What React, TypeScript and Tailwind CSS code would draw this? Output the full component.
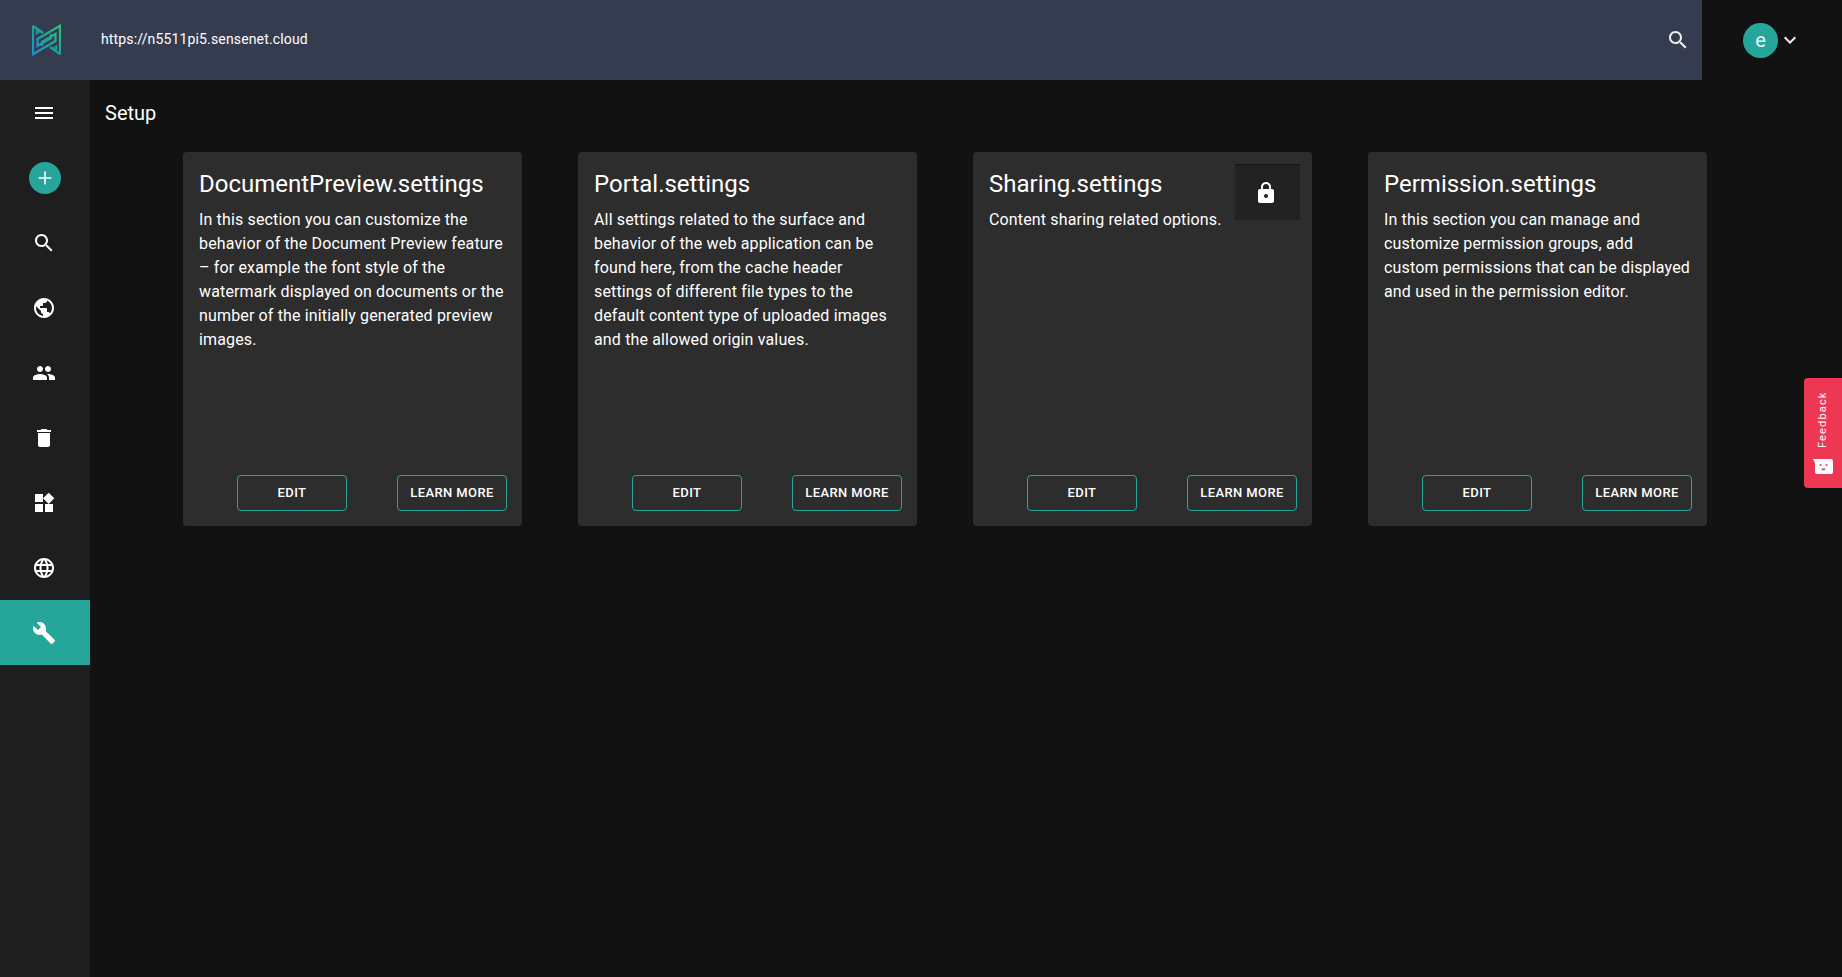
import { Plus } from "lucide-react";
import type { ReactNode } from "react";

const font = "font-['Roboto',sans-serif]";

// material icon paths
const icons = {
  menu: "M3 18h18v-2H3v2zm0-5h18v-2H3v2zm0-7v2h18V6H3z",
  search:
    "M15.5 14h-.79l-.28-.27C15.41 12.59 16 11.11 16 9.5 16 5.91 13.09 3 9.5 3S3 5.91 3 9.5 5.91 16 9.5 16c1.61 0 3.09-.59 4.23-1.57l.27.28v.79l5 4.99L20.49 19l-4.99-5zm-6 0C7.01 14 5 11.99 5 9.5S7.01 5 9.5 5 14 7.01 14 9.5 11.99 14 9.5 14z",
  public:
    "M12 2C6.48 2 2 6.48 2 12s4.48 10 10 10 10-4.48 10-10S17.52 2 12 2zm-1 17.93c-3.95-.49-7-3.85-7-7.93 0-.62.08-1.21.21-1.79L9 15v1c0 1.1.9 2 2 2v1.93zm6.9-2.54c-.26-.81-1-1.39-1.9-1.39h-1v-3c0-.55-.45-1-1-1H8v-2h2c.55 0 1-.45 1-1V7h2c1.1 0 2-.9 2-2v-.41c2.93 1.19 5 4.06 5 7.41 0 2.08-.8 3.97-2.1 5.39z",
  people:
    "M16 11c1.66 0 2.99-1.34 2.99-3S17.66 5 16 5c-1.66 0-3 1.34-3 3s1.34 3 3 3zm-8 0c1.66 0 2.99-1.34 2.99-3S9.66 5 8 5C6.34 5 5 6.34 5 8s1.34 3 3 3zm0 2c-2.33 0-7 1.17-7 3.5V19h14v-2.5c0-2.33-4.67-3.5-7-3.5zm8 0c-.29 0-.62.02-.97.05 1.16.84 1.97 1.97 1.97 3.45V19h6v-2.5c0-2.33-4.67-3.5-7-3.5z",
  trash:
    "M6 19c0 1.1.9 2 2 2h8c1.1 0 2-.9 2-2V7H6v12zM19 4h-3.5l-1-1h-5l-1 1H5v2h14V4z",
  widgets:
    "M13 13v8h8v-8h-8zM3 21h8v-8H3v8zM3 3v8h8V3H3zm13.66-1.31L11 7.34 16.66 13l5.66-5.66-5.66-5.65z",
  language:
    "M11.99 2C6.47 2 2 6.48 2 12s4.47 10 9.99 10C17.52 22 22 17.52 22 12S17.52 2 11.99 2zm6.93 6h-2.95c-.32-1.25-.78-2.45-1.38-3.56 1.84.63 3.37 1.91 4.33 3.56zM12 4.04c.83 1.2 1.48 2.53 1.91 3.96h-3.82c.43-1.43 1.08-2.76 1.91-3.96zM4.26 14C4.1 13.36 4 12.69 4 12s.1-1.36.26-2h3.38c-.08.66-.14 1.32-.14 2 0 .68.06 1.34.14 2H4.26zm.82 2h2.95c.32 1.25.78 2.45 1.38 3.56-1.84-.63-3.37-1.9-4.33-3.56zm2.95-8H5.08c.96-1.66 2.49-2.93 4.33-3.56C8.81 5.55 8.35 6.75 8.03 8zM12 19.96c-.83-1.2-1.48-2.53-1.91-3.96h3.82c-.43 1.43-1.08 2.76-1.91 3.96zM14.34 14H9.66c-.09-.66-.16-1.32-.16-2 0-.68.07-1.35.16-2h4.68c.09.65.16 1.32.16 2 0 .68-.07 1.34-.16 2zm.25 5.56c.6-1.11 1.06-2.31 1.38-3.56h2.95c-.96 1.65-2.49 2.93-4.33 3.56zM16.36 14c.08-.66.14-1.32.14-2 0-.68-.06-1.34-.14-2h3.38c.16.64.26 1.31.26 2s-.1 1.36-.26 2h-3.38z",
  build:
    "M22.7 19l-9.1-9.1c.9-2.3.4-5-1.5-6.9-2-2-5-2.4-7.4-1.3L9 6 6 9 1.6 4.7C.4 7.1.9 10.1 2.9 12.1c1.9 1.9 4.6 2.4 6.9 1.5l9.1 9.1c.4.4 1 .4 1.4 0l2.3-2.3c.5-.4.5-1.1.1-1.4z",
  lock:
    "M18 8h-1V6c0-2.76-2.24-5-5-5S7 3.24 7 6v2H6c-1.1 0-2 .9-2 2v10c0 1.1.9 2 2 2h12c1.1 0 2-.9 2-2V10c0-1.1-.9-2-2-2zm-6 9c-1.1 0-2-.9-2-2s.9-2 2-2 2 .9 2 2-.9 2-2 2zm3.1-9H8.9V6c0-1.71 1.39-3.1 3.1-3.1 1.71 0 3.1 1.39 3.1 3.1v2z",
  chevron: "M7.41 8.59 12 13.17l4.59-4.58L18 10l-6 6-6-6 1.41-1.41z",
};

function Icon({ d, className = "" }: { d: string; className?: string }) {
  return (
    <svg viewBox="0 0 24 24" fill="currentColor" className={`h-6 w-6 ${className}`}>
      <path d={d} />
    </svg>
  );
}

function Logo() {
  return (
    <svg viewBox="0 0 29 32" className="h-8 w-[29px]" fill="none">
      <defs>
        <linearGradient id="sn" x1="0" y1="32" x2="29" y2="0" gradientUnits="userSpaceOnUse">
          <stop offset="0" stopColor="#1a8fd4" />
          <stop offset="0.5" stopColor="#1fa39c" />
          <stop offset="1" stopColor="#2cc878" />
        </linearGradient>
      </defs>
      <g stroke="url(#sn)" strokeWidth="2.2" strokeLinejoin="miter">
        <path d="M1 1.8V30.2L23.5 17V10L10 18V22" />
        <path d="M28 30.2V1.8L5.5 15V22L19 14V10" />
        <path d="M1 1.8 11 9" />
        <path d="M28 30.2 18 23" />
        <path d="M4.5 6.5 7 8.3 4.5 10Z" strokeWidth="1.2" />
        <path d="M24.5 25.5 22 23.7 24.5 22Z" strokeWidth="1.2" />
      </g>
    </svg>
  );
}

function NavItem({ children, active }: { children: ReactNode; active?: boolean }) {
  return (
    <div
      className={`flex h-[65px] items-center justify-center pr-[2px] text-white ${
        active ? "bg-[#26a69a]" : ""
      }`}
    >
      {children}
    </div>
  );
}

function Sidebar() {
  return (
    <aside className="w-[90px] shrink-0 bg-[#1e1e1e]">
      <NavItem>
        <Icon d={icons.menu} />
      </NavItem>
      <NavItem>
        <div className="ml-[2px] flex h-8 w-8 items-center justify-center rounded-full bg-[#26a69a]">
          <Plus size={20} strokeWidth={2} />
        </div>
      </NavItem>
      <NavItem>
        <Icon d={icons.search} />
      </NavItem>
      <NavItem>
        <Icon d={icons.public} />
      </NavItem>
      <NavItem>
        <Icon d={icons.people} />
      </NavItem>
      <NavItem>
        <Icon d={icons.trash} />
      </NavItem>
      <NavItem>
        <Icon d={icons.widgets} />
      </NavItem>
      <NavItem>
        <Icon d={icons.language} />
      </NavItem>
      <NavItem active>
        <Icon d={icons.build} />
      </NavItem>
    </aside>
  );
}

type Setting = { title: string; text: string; locked?: boolean };

const settings: Setting[] = [
  {
    title: "DocumentPreview.settings",
    text: "In this section you can customize the behavior of the Document Preview feature – for example the font style of the watermark displayed on documents or the number of the initially generated preview images.",
  },
  {
    title: "Portal.settings",
    text: "All settings related to the surface and behavior of the web application can be found here, from the cache header settings of different file types to the default content type of uploaded images and the allowed origin values.",
  },
  {
    title: "Sharing.settings",
    text: "Content sharing related options.",
    locked: true,
  },
  {
    title: "Permission.settings",
    text: "In this section you can manage and customize permission groups, add custom permissions that can be displayed and used in the permission editor.",
  },
];

function OutlineButton({ label }: { label: string }) {
  return (
    <button className="flex h-9 w-[110px] items-center justify-center rounded-[4px] border border-[#26a69a] text-[13px] font-medium tracking-[0.4px] text-white">
      {label}
    </button>
  );
}

function SettingCard({ item }: { item: Setting }) {
  return (
    <div className="relative flex h-[374px] w-[339px] shrink-0 flex-col rounded-[4px] bg-[#2d2d2d] text-white">
      <div className="flex-1 px-4 pt-4">
        <h2 className="text-[24px] leading-8">{item.title}</h2>
        <p className="mt-2 text-[16px] leading-6 tracking-[0.15px]">{item.text}</p>
      </div>
      {item.locked && (
        <div className="absolute right-3 top-3 flex h-14 w-[65px] items-center justify-center border-t border-t-[#151515] bg-[#222222] pr-[3px]">
          <Icon d={icons.lock} />
        </div>
      )}
      <div className="flex justify-end gap-[50px] pb-[15px] pr-[15px]">
        <OutlineButton label="EDIT" />
        <OutlineButton label="LEARN MORE" />
      </div>
    </div>
  );
}

export default function App() {
  return (
    <div className={`relative flex h-screen w-full flex-col overflow-hidden bg-[#121212] ${font}`}>
      <header className="flex h-20 shrink-0">
        <div className="flex w-[1702px] items-center bg-[#363c50] pl-8 pr-3 text-white">
          <Logo />
          <span className="ml-10 flex-1 pb-[2px] text-[14px] tracking-[0.15px]">https://n5511pi5.sensenet.cloud</span>
          <Icon d={icons.search} className="text-[#eeeeee]" />
        </div>
        <div className="flex flex-1 items-center pl-[41px] text-[#eeeeee]">
          <div className="flex h-[35px] w-[35px] items-center justify-center rounded-full bg-[#26a69a] text-[20px] text-[#e8f5f3]">
            e
          </div>
          <Icon d={icons.chevron} />
        </div>
      </header>

      <div className="flex min-h-0 flex-1">
        <Sidebar />
        <main className="flex-1">
          <h1 className="pl-[15px] pt-[19px] text-[20px] font-normal leading-[28px] text-white">Setup</h1>
          <div className="mt-[25px] flex gap-[56px] pl-[93px]">
            {settings.map((s) => (
              <SettingCard key={s.title} item={s} />
            ))}
          </div>
        </main>
      </div>

      <div className="absolute right-0 top-[378px] flex h-[110px] w-[38px] flex-col items-center rounded-l-[4px] bg-[#ee3752] text-white">
        <span className="mt-[13px] h-[57px] rotate-180 text-[11px] leading-[16px] tracking-[1.15px] [writing-mode:vertical-rl]">
          Feedback
        </span>
        <svg viewBox="0 0 20 15" className="mt-[11px] h-[15px] w-5">
          <path d="M0 0h18a2 2 0 0 1 2 2v11a2 2 0 0 1-2 2H4a2 2 0 0 1-2-2V4z" fill="#ffffff" />
          <circle cx="7.5" cy="6" r="1" fill="#ee3752" />
          <circle cx="13.5" cy="6" r="1" fill="#ee3752" />
          <path d="M8.5 9.5h4a2 2 0 0 1-4 0z" fill="#ee3752" />
        </svg>
      </div>
    </div>
  );
}
